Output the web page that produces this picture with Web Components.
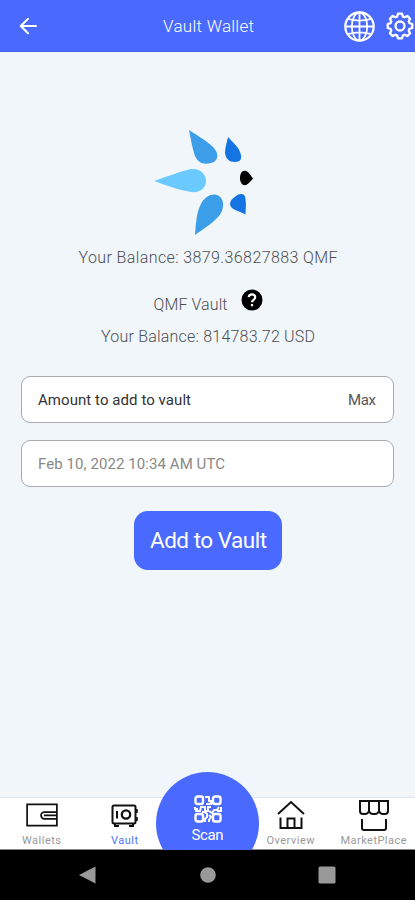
<!DOCTYPE html>
<html lang="en"><head><meta charset="utf-8"><title>Vault Wallet</title>
<style>html,body{margin:0;height:100%;overflow:hidden}body{font-family:Roboto,"Liberation Sans",sans-serif;background:#f1f6fa}</style></head>
<body><vault-app></vault-app>
<script>
const define=(name,html,ready)=>customElements.define(name,class extends HTMLElement{
  connectedCallback(){
    if(this.shadowRoot)return;
    const t=document.createElement('template');t.innerHTML=html;
    this.attachShadow({mode:'open'}).append(t.content.cloneNode(true));
    if(ready)ready.call(this);
  }
});

// A single line of text, tracked so that it fills the width in its "w" attribute.
define('fit-text',`<style>:host{display:block;white-space:nowrap;flex:none}span{display:inline-block}</style><span></span>`,function(){
  const s=this.shadowRoot.querySelector('span'),text=this.getAttribute('text'),w=+this.getAttribute('w');
  s.textContent=text;
  const gap=(w-s.getBoundingClientRect().width)/(text.length-1);
  s.style.letterSpacing=gap+'px';s.style.marginRight=-gap+'px';
  this.style.width=w+'px';
});

define('app-header',`<style>
:host{display:flex;align-items:center;height:51px;background:#4a69ff;border-bottom:1px solid #4360e8;color:#fff;box-sizing:content-box}
svg{display:block;flex:none}.back{margin-left:19px}fit-text{font-size:17px;line-height:24px;margin:1px 0 0 126px;font-weight:300}
.globe{margin:1px 0 0 90px}.gear{margin:1px 0 0 11px}</style>
<svg class="back" width="18" height="18" viewBox="0 0 18 18" fill="none" stroke="#fff" stroke-width="2" stroke-linecap="round"><path d="M17 9H2M9 1.8 1.8 9 9 16.2"/></svg>
<fit-text text="Vault Wallet" w="91"></fit-text>
<svg class="globe" width="31" height="31" viewBox="0 0 31 31" fill="none" stroke="#fff" stroke-width="1.8"><circle cx="15.5" cy="15.5" r="14.2" stroke-width="2.2"/><ellipse cx="15.5" cy="15.5" rx="7.7" ry="14"/><path d="M15.5 1.5v28M1.5 15.5h28M4 7.8q11.500 3.500 23 0M4 23.200q11.500-3.500 23 0"/></svg>
<svg class="gear" width="28" height="28" viewBox="-14 -14 28 28" fill="none" stroke="#fff" stroke-width="2.3" stroke-linejoin="round"><path d="M-2.900-9.400-2-12.300 2-12.300 2.900-9.400 4.600-8.700 7.300-10.100 10.100-7.300 8.700-4.600 9.400-2.900 12.300-2 12.300 2 9.400 2.900 8.700 4.600 10.100 7.300 7.300 10.100 4.600 8.700 2.900 9.400 2 12.300-2 12.300-2.900 9.400-4.600 8.700-7.300 10.100-10.100 7.300-8.700 4.600-9.400 2.900-12.300 2-12.300-2-9.400-2.900-8.700-4.600-10.100-7.300-7.300-10.100-4.600-8.700z"/><circle r="4.500"/></svg>`);

define('petal-logo',`<style>:host{display:block;width:100px;height:107px}svg{display:block}</style>
<svg width="100" height="107" viewBox="154 129 100 107">
<path fill="#3c9de9" d="M189 130c9 6 18 11 24 17 7 7 5 15-2 16-7 2-13 0-16-7-3-8-4-17-6-26z"/>
<path fill="#1474e4" d="M228 137c4 5 10 9 12 15 3 7 0 10-5 10-6 0-9-3-10-9 0-6 2-11 3-16z"/>
<path fill="#6acaff" d="M154 181c12-4 24-9 37-12 9-1 15 5 15 12s-6 12-15 11c-13-2-25-7-37-11z"/>
<path fill="#3c9de9" d="M195 235c1-10 1-20 5-29 4-10 13-14 19-10 6 4 5 14 0 20-7 8-16 13-24 19z"/>
<path fill="#1474e4" d="M245.500 214.500c-5-3-11-4-14-7-3-4-1-8 4-11 5-4 10-3 10 3 1 5 0 10 0 15z"/>
<path fill="#000" d="M253 178.500c-2 2-4 5-7 6.500-4 1-6-3-6-7s2-8 6-7c3 1 5 5 7 7.500z"/></svg>`);

define('help-badge',`<style>:host{display:block;width:22px;height:22px}svg{display:block}</style>
<svg width="22" height="22" viewBox="0 0 22 22"><circle cx="11" cy="11" r="10.500"/><path d="M7.700 8.200C8 4.300 14.300 4.500 14.200 8.200c0 2.600-3.200 2.500-3.200 5M11 15v2.200" fill="none" stroke="#fff" stroke-width="2.200"/></svg>`);

define('vault-field',`<style>:host{display:flex;align-items:center;justify-content:space-between;box-sizing:border-box;width:373px;height:47px;padding:1px 17px 0 16px;border:1px solid #aaa;border-radius:9px;background:#fff;font-size:15px;line-height:20px}</style><slot></slot>`);
define('vault-button',`<style>:host{display:flex;align-items:center;justify-content:center;box-sizing:border-box;padding:0 0 2px 1px;width:148px;height:59px;border-radius:14px;background:#4a69ff;color:#fff;font-size:22.500px;line-height:28px}</style><slot></slot>`);

define('nav-item',`<style>:host{display:flex;flex-direction:column;align-items:center;width:83px;flex:none;color:#999;font-size:11px;line-height:14px}
:host([active]){color:#4a74ff}.i{height:32px;margin-bottom:3px;display:flex;align-items:center}</style><div class="i"><slot name="icon"></slot></div><slot></slot>`);

define('scan-button',`<style>:host{display:block;position:absolute;left:156px;top:-26px;width:103px;height:78px;overflow:hidden;color:#fff}
.c{display:flex;flex-direction:column;align-items:center;width:103px;height:103px;border-radius:50%;background:#4a69ff}
svg{margin-top:23px}fit-text{font-size:15px;line-height:20px;margin-top:2px}</style>
<div class="c"><svg width="28" height="28" viewBox="0 0 28 28" fill="none" stroke="#fff" stroke-width="2.4"><rect x="1.5" y="1.500" width="7.500" height="7.500" rx="2"/><rect x="19" y="1.500" width="7.500" height="7.500" rx="2"/><rect x="1.500" y="19" width="7.500" height="7.500" rx="2"/><rect x="19" y="19" width="7.500" height="7.500" rx="2"/><path stroke-width="2" d="M11 2h4v4h3M12 9h5V7M1 12v2h3M1 16h5l1-4h4v4h3v-4h3M8 17h3l2 2v3l-2 2v3M15 16l3 2 2-3h3l2-3M27 12v4h-4M15 20l2 2-2 3v2"/></svg><fit-text text="Scan" w="32"></fit-text></div>`);

define('bottom-nav',`<style>:host{display:flex;position:relative;height:53px;padding-top:1px;box-sizing:border-box;border-top:1px solid #e2e5e8;border-bottom:1px solid #888;background:#fff}svg{display:block}nav-item[gap]{margin-left:83px}</style>
<nav-item><svg slot="icon" width="32" height="24" viewBox="0 0 33 25" fill="none" stroke="#111" stroke-width="2"><path d="M32 7.500V1.500H1v22h31v-5.500M32 7.500v10.500M32 9.500H19a3.500 3.500 0 0 0 0 7h13M18.500 13H32" stroke-width="1.800"/></svg><fit-text text="Wallets" w="39"></fit-text></nav-item>
<nav-item active><svg slot="icon" width="27" height="23" viewBox="0 0 27 23" fill="none" stroke="#111" stroke-width="2"><rect x="1.500" y="1.500" width="23" height="18" rx="1.500"/><path d="M6 7v7.500M4 19v3h4M22 19v3h-4M25.800 5v4M25.800 13v4"/><circle cx="15" cy="10.500" r="4.200" stroke-width="2.300"/></svg><fit-text text="Vault" w="27"></fit-text></nav-item>
<nav-item gap><svg slot="icon" width="28" height="30" viewBox="0 0 28 30" fill="none" stroke="#111" stroke-width="2"><path d="M1 14 14 2l13 12M3.500 17.500V28h21V17.500M10.500 28v-9.500h7V28"/></svg><fit-text text="Overview" w="48"></fit-text></nav-item>
<nav-item><svg slot="icon" width="32" height="32" viewBox="0 0 32 32" fill="none" stroke="#111" stroke-width="2"><path d="M2 2h28v10q0 3-3 3h-2q-3 0-4-3-1 3-4 3h-2q-3 0-4-3-1 3-4 3H5q-3 0-3-3zM11 2v10M21 2v10M4 20v9q0 2 2 2h20q2 0 2-2v-9"/></svg><fit-text text="MarketPlace" w="66"></fit-text></nav-item>
<scan-button></scan-button>`);

define('system-bar',`<style>:host{display:grid;position:relative;grid-template-columns:78px 120px 20px 100px 18px;align-items:center;height:50px;background:#000}svg{display:block}svg:nth-of-type(1){grid-column:1;justify-self:end;margin-right:-18px}svg:nth-of-type(2){grid-column:3;justify-self:center}svg:nth-of-type(3){grid-column:5}</style>
<svg width="17" height="18"><path fill="#999" d="M0 9 16.500.500v17z"/></svg><svg width="16" height="16"><circle cx="8" cy="8" r="7.800" fill="#999"/></svg><svg width="18" height="18"><rect x=".5" y=".5" width="17" height="17" rx="1.500" fill="#999"/></svg>`);

define('vault-app',`<style>:host{display:flex;flex-direction:column;width:415px;height:900px;background:#f1f6fa;color:#4c4f53}
main{flex:1;display:flex;flex-direction:column;align-items:center;padding-left:1px}
petal-logo{margin:77px 9px 0 0}.b{font-size:16px;line-height:20px;font-weight:300}.b1{margin-top:12px}
.row{display:flex;align-items:center;gap:13px;margin-top:18px;height:32px}.row .b{margin-top:5px}.row help-badge{margin-top:-4px}.b2{margin-top:9px}
.f1{margin:29px 1px 0 0;color:#333}.f2{margin:17px 1px 0 0;color:#888}vault-button{margin-top:24px}.max{color:#555}</style>
<app-header></app-header>
<main><petal-logo></petal-logo>
<fit-text class="b b1" text="Your Balance: 3879.36827883 QMF" w="259"></fit-text>
<div class="row"><fit-text class="b" text="QMF Vault" w="74"></fit-text><help-badge></help-badge></div>
<fit-text class="b b2" text="Your Balance: 814783.72 USD" w="214"></fit-text>
<vault-field class="f1"><fit-text text="Amount to add to vault" w="153"></fit-text><fit-text class="max" text="Max" w="28"></fit-text></vault-field>
<vault-field class="f2"><fit-text text="Feb 10, 2022 10:34 AM UTC" w="187"></fit-text></vault-field>
<vault-button><fit-text text="Add to Vault" w="117"></fit-text></vault-button></main>
<bottom-nav></bottom-nav><system-bar></system-bar>`);
</script></body></html>
